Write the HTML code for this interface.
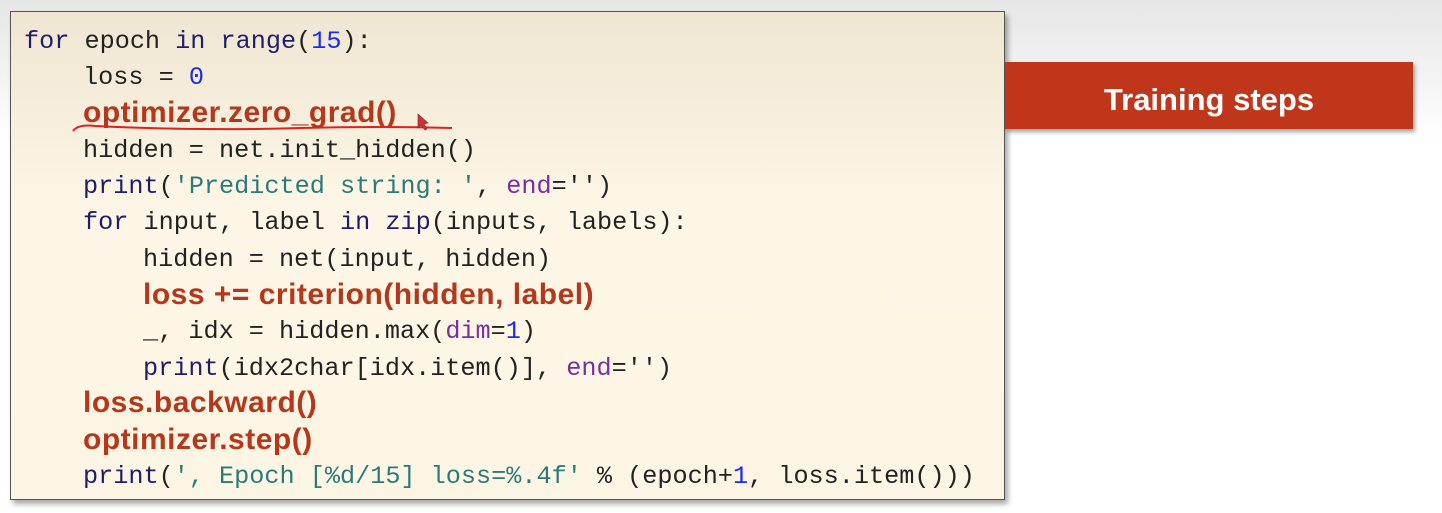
<!DOCTYPE html>
<html><head><meta charset="utf-8"><style>
html,body{margin:0;padding:0;}
body{width:1442px;height:513px;position:relative;overflow:hidden;background:linear-gradient(#e6e6e6 0px,#f4f4f4 80px,#ffffff 140px);}
.box{position:absolute;left:10px;top:11px;width:993px;height:487px;border:1px solid #555;background:linear-gradient(#efe6d2,#fdf6e6 40%,#fdf5e4);box-shadow:3px 4px 5px rgba(0,0,0,.35);}
.l{position:absolute;left:0;height:36px;line-height:36px;font-family:"Liberation Mono",monospace;font-size:25.2px;color:#222;white-space:pre;}
.b{font-family:"Liberation Sans",sans-serif;font-weight:bold;color:#b5381c;font-size:30px;letter-spacing:0.5px;}
.k{color:#1e1e6a}.s{color:#2a7a7a}.n{color:#1a2aee}.p{color:#7a2f9a}
.banner{position:absolute;left:1005px;top:62px;width:408px;height:67px;background:#c0361a;box-shadow:2px 3px 4px rgba(0,0,0,.35);color:#fff;font-family:"Liberation Sans",sans-serif;font-weight:bold;font-size:31px;line-height:76px;text-align:center;}
</style></head><body>
<div class="box"></div>
<div class="l" style="left:24px;top:24px"><span class="k">for</span> epoch <span class="k">in</span> <span class="k">range</span>(<span class="n">15</span>):</div>
<div class="l" style="left:83px;top:60px">loss = <span class="n">0</span></div>
<div class="l b" style="left:83px;top:95px">optimizer.zero_grad()</div>
<div class="l" style="left:83px;top:133px">hidden = net.init_hidden()</div>
<div class="l" style="left:83px;top:169px"><span class="k">print</span>(<span class="s">'Predicted string: '</span>, <span class="p">end</span>='')</div>
<div class="l" style="left:83px;top:205px"><span class="k">for</span> input, label <span class="k">in</span> <span class="k">zip</span>(inputs, labels):</div>
<div class="l" style="left:143px;top:242px">hidden = net(input, hidden)</div>
<div class="l b" style="left:143px;top:277px">loss += criterion(hidden, label)</div>
<div class="l" style="left:143px;top:314px">_, idx = hidden.max(<span class="p">dim</span>=<span class="n">1</span>)</div>
<div class="l" style="left:143px;top:351px"><span class="k">print</span>(idx2char[idx.item()], <span class="p">end</span>='')</div>
<div class="l b" style="left:83px;top:385px">loss.backward()</div>
<div class="l b" style="left:83px;top:422px">optimizer.step()</div>
<div class="l" style="left:83px;top:459px"><span class="k">print</span>(<span class="s">', Epoch [%d/15] loss=%.4f'</span> % (epoch+<span class="n">1</span>, loss.item()))</div>
<svg style="position:absolute;left:0;top:0" width="1442" height="513"><path d="M73 131 Q78 124 95 126 Q200 131 300 128 Q380 126 452 128" stroke="#e0201a" stroke-width="2" fill="none"/><path d="M418 114 L418 128 L421 125 L425 130 L427 129 L424 124 L428 123 Z" fill="#d0303a" stroke="#802020" stroke-width=".6"/></svg>
<div class="banner">Training steps</div>
</body></html>
